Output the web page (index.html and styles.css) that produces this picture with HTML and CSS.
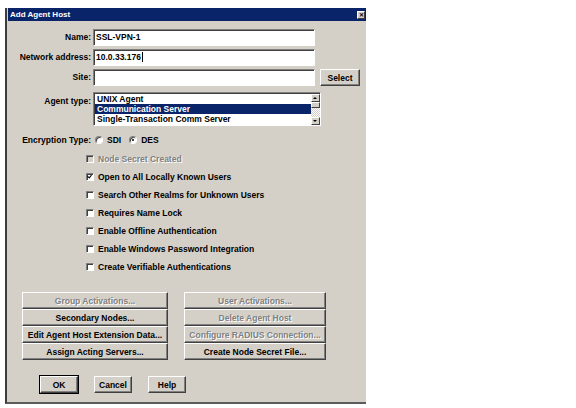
FILE: index.html
```html
<!DOCTYPE html>
<html lang="en">
<head>
    <meta charset="UTF-8">
    <title>Add Agent Host</title>
    <link rel="stylesheet" href="styles.css">
</head>
<body>
    <div class="window">
        <div class="titlebar">
            <span class="title">Add Agent Host</span>
            <span class="close">&#x2715;</span>
        </div>
        <div class="content">
            <div class="row">
                <label class="label">Name:</label>
                <div class="field">SSL-VPN-1</div>
            </div>
            <div class="row">
                <label class="label">Network address:</label>
                <div class="field">10.0.33.176<span class="caret"></span></div>
            </div>
            <div class="row">
                <label class="label">Site:</label>
                <div class="field"></div>
                <button class="btn select-btn">Select</button>
            </div>
            <div class="row list-row">
                <label class="label">Agent type:</label>
                <div class="listbox">
                    <ul class="items">
                        <li>UNIX Agent</li>
                        <li class="selected">Communication Server</li>
                        <li>Single-Transaction Comm Server</li>
                    </ul>
                    <div class="scrollbar">
                        <span class="arrow up"></span>
                        <span class="thumb"></span>
                        <span class="track"></span>
                        <span class="arrow down"></span>
                    </div>
                </div>
            </div>
            <div class="row enc-row">
                <label class="label">Encryption Type:</label>
                <div class="radios">
                    <span class="radio"></span><span>SDI</span>
                    <span class="radio checked"></span><span>DES</span>
                </div>
            </div>

            <ul class="checks">
                <li class="disabled"><span class="box"></span>Node Secret Created</li>
                <li><span class="box checked"></span>Open to All Locally Known Users</li>
                <li><span class="box"></span>Search Other Realms for Unknown Users</li>
                <li><span class="box"></span>Requires Name Lock</li>
                <li><span class="box"></span>Enable Offline Authentication</li>
                <li><span class="box"></span>Enable Windows Password Integration</li>
                <li><span class="box"></span>Create Verifiable Authentications</li>
            </ul>

            <div class="actions">
                <button class="btn" disabled>Group Activations...</button>
                <button class="btn" disabled>User Activations...</button>
                <button class="btn">Secondary Nodes...</button>
                <button class="btn" disabled>Delete Agent Host</button>
                <button class="btn">Edit Agent Host Extension Data...</button>
                <button class="btn" disabled>Configure RADIUS Connection...</button>
                <button class="btn">Assign Acting Servers...</button>
                <button class="btn">Create Node Secret File...</button>
            </div>

            <div class="footer">
                <button class="btn default">OK</button>
                <button class="btn">Cancel</button>
                <button class="btn">Help</button>
            </div>
        </div>
    </div>
</body>
</html>
```

FILE: styles.css
```css
body {
    margin: 0;
    background: #fff;
    font-family: "Liberation Sans", Arial, sans-serif;
    font-size: 8.5px;
    font-weight: bold;
    color: #000;
}
.window {
    margin: 8px 0 0 5px;
    width: 359px;
    height: 394px;
    background: #d4d0c8;
    border-left: 2px solid #3c3c3c;
    border-bottom: 2px solid #5c5c5c;
}
.titlebar {
    margin-left: 1px;
    height: 13px;
    background: #0a246a;
    color: #fff;
    display: flex;
    align-items: center;
    justify-content: space-between;
    padding: 0 1px 0 2px;
}
.title {
    font-size: 8px;
}
.close {
    width: 8px;
    height: 8px;
    box-sizing: border-box;
    background: #d4d0c8;
    color: #000;
    border: 1px solid;
    border-color: #fff #404040 #404040 #fff;
    font-size: 6px;
    line-height: 6px;
    text-align: center;
}
.content {
    display: flex;
    flex-direction: column;
    padding-top: 8px;
}

/* label + field rows */
.row {
    display: grid;
    grid-template-columns: 84px 222px auto;
    column-gap: 2px;
    align-items: center;
    margin-bottom: 3px;
}
.label {
    text-align: right;
    line-height: 17px;
}
.field {
    height: 17px;
    box-sizing: border-box;
    background: #fff;
    border: 1px solid;
    border-color: #808080 #fff #fff #808080;
    box-shadow: inset 1px 1px #404040;
    padding: 0 2px;
    line-height: 15px;
}
.caret {
    display: inline-block;
    width: 1px;
    height: 10px;
    background: #000;
    vertical-align: -2px;
    margin-left: 1px;
}
.btn {
    font: inherit;
    color: #000;
    background: #d4d0c8;
    border: 1px solid;
    border-color: #fff #404040 #404040 #fff;
    box-shadow: inset -1px -1px #808080;
    padding: 0;
    height: 17px;
    text-align: center;
}
.btn:disabled {
    color: #808080;
    text-shadow: 1px 1px #fff;
}
.select-btn {
    width: 40px;
    height: 17px;
    margin-left: 3px;
}

/* agent type list */
.list-row {
    align-items: start;
    margin-top: 3px;
    margin-bottom: 0;
}
.list-row .label {
    line-height: 14px;
    margin-top: 2px;
}
.listbox {
    width: 228px;
    height: 34px;
    box-sizing: border-box;
    display: flex;
    background: #fff;
    border: 1px solid;
    border-color: #808080 #fff #fff #808080;
    box-shadow: inset 1px 1px #404040;
    padding: 1px 0 0 1px;
}
.items {
    list-style: none;
    margin: 0;
    padding: 0;
    flex: 1;
}
.items li {
    height: 10px;
    line-height: 10px;
    padding-left: 2px;
}
.items .selected {
    background: #0a246a;
    color: #fff;
}
.scrollbar {
    width: 9px;
    display: flex;
    flex-direction: column;
}
.arrow,
.thumb {
    height: 8px;
    box-sizing: border-box;
    background: #d4d0c8;
    border: 1px solid;
    border-color: #fff #404040 #404040 #fff;
    position: relative;
}
.thumb {
    height: 6px;
}
.track {
    flex: 1;
    background: repeating-conic-gradient(#d4d0c8 0 25%, #fff 0 50%) 0 0 / 2px 2px;
}
.arrow::after {
    content: "";
    position: absolute;
    left: 1px;
    border-left: 2.5px solid transparent;
    border-right: 2.5px solid transparent;
}
.arrow.up::after {
    top: 2px;
    border-bottom: 2px solid #000;
}
.arrow.down::after {
    top: 2px;
    border-top: 2px solid #000;
}

/* encryption radios */
.enc-row {
    margin-top: 8px;
}
.enc-row .label {
    line-height: 12px;
}
.radios {
    display: flex;
    align-items: center;
    gap: 4px;
}
.radio {
    width: 8px;
    height: 8px;
    box-sizing: border-box;
    border-radius: 50%;
    background: #fff;
    border: 1px solid;
    border-color: #808080 #fff #fff #808080;
    box-shadow: inset 1px 1px #404040;
    margin-left: 2px;
    position: relative;
}
.radios span + .radio {
    margin-left: 4px;
}
.radio.checked::after {
    content: "";
    position: absolute;
    left: 2px;
    top: 2px;
    width: 2px;
    height: 2px;
    border-radius: 50%;
    background: #000;
}

/* checkboxes */
.checks {
    list-style: none;
    margin: 4px 0 0 79px;
    padding: 0;
}
.checks li {
    height: 12px;
    line-height: 12px;
    margin-bottom: 6px;
    display: flex;
    align-items: center;
}
.checks .disabled {
    color: #808080;
    text-shadow: 1px 1px #fff;
}
.box {
    width: 8px;
    height: 8px;
    box-sizing: border-box;
    background: #fff;
    border: 1px solid;
    border-color: #808080 #fff #fff #808080;
    box-shadow: inset 1px 1px #404040;
    margin-right: 4px;
    position: relative;
}
.disabled .box {
    background: #d4d0c8;
}
.box.checked::after {
    content: "";
    position: absolute;
    left: 1px;
    top: 0;
    width: 2px;
    height: 3px;
    border: solid #000;
    border-width: 0 1.5px 1.5px 0;
    transform: rotate(40deg);
}

/* action buttons */
.actions {
    display: grid;
    grid-template-columns: 146px 142px;
    column-gap: 16px;
    margin: 13px 0 0 15px;
}
.footer {
    display: flex;
    gap: 16px;
    margin: 16px 0 0 33px;
}
.footer .btn {
    width: 38px;
}
.btn.default {
    outline: 1px solid #000;
}
```
